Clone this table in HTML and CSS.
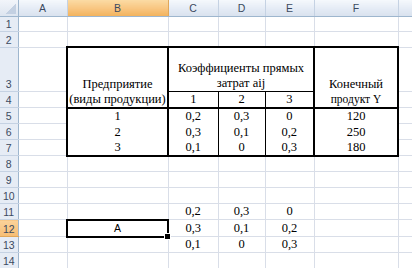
FILE: index.html
```html
<!DOCTYPE html>
<html>
<head>
<meta charset="utf-8">
<link rel="stylesheet" href="styles.css">
</head>
<body>
<table class="sheet">
  <colgroup>
    <col class="c-rh"><col class="c-a"><col class="c-b"><col class="c-c"><col class="c-d"><col class="c-e"><col class="c-f"><col class="c-g">
  </colgroup>
  <tr class="r-head">
    <th class="corner"></th><th class="ch">A</th><th class="ch ch-sel">B</th><th class="ch">C</th><th class="ch">D</th><th class="ch">E</th><th class="ch">F</th><th class="ch"></th>
  </tr>
  <tr class="r-15">
    <th class="rh">1</th><td></td><td></td><td></td><td></td><td></td><td></td><td></td>
  </tr>
  <tr class="r-16">
    <th class="rh">2</th><td></td><td></td><td></td><td></td><td></td><td></td><td></td>
  </tr>
  <tr class="r-tall">
    <th class="rh">3</th><td></td>
    <td class="tb bl2 br2 bt2 bb2" rowspan="2">Предприятие<br>(виды продукции)</td>
    <td class="tb bl2 br2 bt2 bb1" colspan="3">Коэффициенты прямых<br>затрат aij</td>
    <td class="tb bl2 br2 bt2 bb2" rowspan="2">Конечный<br><span class="sm">продукт Y</span></td>
    <td></td>
  </tr>
  <tr class="r-16">
    <th class="rh">4</th><td></td>
    <td class="tb bl2 br1 bt1 bb2">1</td>
    <td class="tb bl1 br1 bt1 bb2">2</td>
    <td class="tb bl1 br2 bt1 bb2">3</td>
    <td></td>
  </tr>
  <tr class="r-16">
    <th class="rh">5</th><td></td>
    <td class="tb bl2 br2">1</td>
    <td class="tb bl2 br1">0,2</td>
    <td class="tb bl1 br1">0,3</td>
    <td class="tb bl1 br2">0</td>
    <td class="tb bl2 br2">120</td>
    <td></td>
  </tr>
  <tr class="r-16">
    <th class="rh">6</th><td></td>
    <td class="tb bl2 br2">2</td>
    <td class="tb bl2 br1">0,3</td>
    <td class="tb bl1 br1">0,1</td>
    <td class="tb bl1 br2">0,2</td>
    <td class="tb bl2 br2">250</td>
    <td></td>
  </tr>
  <tr class="r-16">
    <th class="rh">7</th><td></td>
    <td class="tb bl2 br2 bb2">3</td>
    <td class="tb bl2 br1 bb2">0,1</td>
    <td class="tb bl1 br1 bb2">0</td>
    <td class="tb bl1 br2 bb2">0,3</td>
    <td class="tb bl2 br2 bb2">180</td>
    <td></td>
  </tr>
  <tr class="r-16">
    <th class="rh">8</th><td></td><td></td><td></td><td></td><td></td><td></td><td></td>
  </tr>
  <tr class="r-16">
    <th class="rh">9</th><td></td><td></td><td></td><td></td><td></td><td></td><td></td>
  </tr>
  <tr class="r-16">
    <th class="rh">10</th><td></td><td></td><td></td><td></td><td></td><td></td><td></td>
  </tr>
  <tr class="r-16">
    <th class="rh">11</th><td></td><td></td><td>0,2</td><td>0,3</td><td>0</td><td></td><td></td>
  </tr>
  <tr class="r-16">
    <th class="rh rh-sel">12</th><td></td><td class="active">A</td><td>0,3</td><td>0,1</td><td>0,2</td><td></td><td></td>
  </tr>
  <tr class="r-16">
    <th class="rh">13</th><td></td><td></td><td>0,1</td><td>0</td><td>0,3</td><td></td><td></td>
  </tr>
  <tr class="r-16">
    <th class="rh">14</th><td></td><td></td><td></td><td></td><td></td><td></td><td></td>
  </tr>
  <tr class="r-last">
    <th class="rh"></th><td></td><td></td><td></td><td></td><td></td><td></td><td></td>
  </tr>
</table>
</body>
</html>
```

FILE: styles.css
```css
html, body {
  margin: 0;
  padding: 0;
  background: #fff;
  overflow: hidden;
  width: 412px;
  height: 268px;
}

.sheet {
  border-collapse: collapse;
  table-layout: fixed;
  width: 412px;
  color: #000;
}

.c-rh { width: 18px; }
.c-a { width: 49px; }
.c-b { width: 101px; }
.c-c { width: 50px; }
.c-d { width: 47px; }
.c-e { width: 49px; }
.c-f { width: 84px; }
.c-g { width: 14px; }

.r-head { height: 16px; }
.r-15 { height: 15px; }
.r-16 { height: 16px; }
.r-tall { height: 44px; }
.r-last { height: 1px; }

.sheet td {
  font-family: "Liberation Serif", "Times New Roman", serif;
  font-size: 12.5px;
  border: 1px solid #d9dee8;
  padding: 0 1px;
  text-align: center;
  vertical-align: bottom;
  line-height: 15px;
  white-space: nowrap;
  overflow: visible;
}

.sheet th {
  font-family: "Liberation Sans", Arial, sans-serif;
  font-weight: normal;
  font-size: 10.5px;
  color: #3b4a60;
  padding: 0;
  line-height: 14px;
}

.r-last td,
.r-last th {
  line-height: 0;
  height: 1px;
}

.corner {
  border-right: 1px solid #9eb6ce;
  border-bottom: 1px solid #9eb6ce;
  background:
    linear-gradient(to bottom right, transparent 50%, #c3d0e2 50%) no-repeat right 2px bottom 2px / 10px 10px,
    linear-gradient(#f2f5fa, #dde5f0);
}

.ch {
  text-align: center;
  vertical-align: middle;
  border-right: 1px solid #c5d2e3;
  border-bottom: 1px solid #9eb6ce;
  background: linear-gradient(#f5f8fc, #e4ebf5 55%, #d9e2ee);
}

.ch-sel {
  background: linear-gradient(#fbdba4, #f8c57f 55%, #f2b35e);
  border-right-color: #e0a75a;
  color: #3b3b3b;
}

.rh {
  text-align: center;
  vertical-align: bottom;
  border-right: 1px solid #9eb6ce;
  border-bottom: 1px solid #c5d2e3;
  background: #e6ecf5;
}

.rh-sel {
  background: linear-gradient(#fbd39a, #f6bd73);
  border-bottom-color: #e0a75a;
}

.sheet td.tb {
  border: none;
  background: #fff;
}

.sheet td.bl2 { border-left: 2px solid #000; }
.sheet td.br2 { border-right: 2px solid #000; }
.sheet td.bt2 { border-top: 2px solid #000; }
.sheet td.bb2 { border-bottom: 2px solid #000; }
.sheet td.bl1 { border-left: 1px solid #000; }
.sheet td.br1 { border-right: 1px solid #000; }
.sheet td.bt1 { border-top: 1px solid #000; }
.sheet td.bb1 { border-bottom: 1px solid #000; }

.sm {
  font-size: 11.5px;
}

.sheet td.active {
  position: relative;
  border: 2px solid #000;
  font-family: "Liberation Sans", Arial, sans-serif;
  font-size: 10.5px;
  vertical-align: middle;
}

.sheet td.active::after {
  content: "";
  position: absolute;
  right: -4px;
  bottom: -4px;
  width: 5px;
  height: 5px;
  background: #000;
  border: 1px solid #fff;
}
```
